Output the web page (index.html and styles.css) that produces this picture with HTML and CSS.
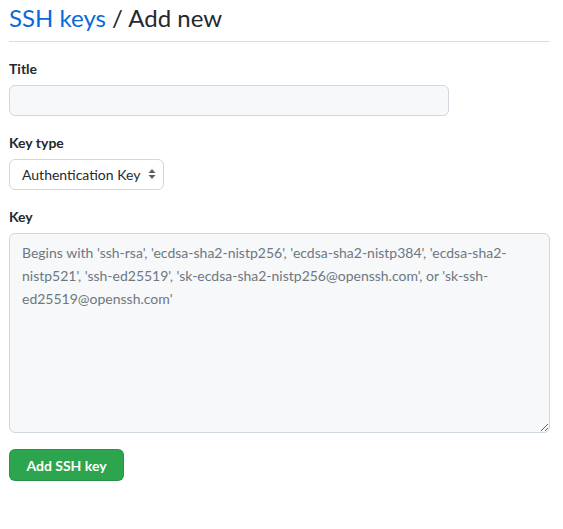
FILE: index.html
```html
<!DOCTYPE html>
<html lang="en">
<head>
<meta charset="utf-8">
<title>Add new SSH key</title>
<link rel="stylesheet" href="styles.css">
</head>
<body>
<div class="page">
  <div class="subhead">
    <h2 class="subhead-heading"><a class="crumb" href="#">SSH keys</a> / Add new</h2>
  </div>
  <form class="key-form">
    <div class="form-group">
      <label class="form-label" for="title">Title</label>
      <input class="form-control title-input" type="text" id="title">
    </div>
    <div class="form-group">
      <label class="form-label" for="type">Key type</label>
      <div class="select-wrap">
        <select class="form-select" id="type">
          <option>Authentication Key</option>
          <option>Signing Key</option>
        </select>
        <svg class="select-caret" width="8" height="12" viewBox="0 0 8 12" aria-hidden="true">
          <path d="M4 1 L7.5 5 H0.5 Z" fill="#57606a"/>
          <path d="M4 11 L7.5 7 H0.5 Z" fill="#57606a"/>
        </svg>
      </div>
    </div>
    <div class="form-group last">
      <label class="form-label" for="key">Key</label>
      <textarea class="form-control key-input" id="key" placeholder="Begins with 'ssh-rsa', 'ecdsa-sha2-nistp256', 'ecdsa-sha2-nistp384', 'ecdsa-sha2-nistp521', 'ssh-ed25519', 'sk-ecdsa-sha2-nistp256@openssh.com', or 'sk-ssh-ed25519@openssh.com'"></textarea>
    </div>
    <button class="btn-primary" type="button">Add SSH key</button>
  </form>
</div>
</body>
</html>
```

FILE: styles.css
```css
html, body {
  margin: 0;
  padding: 0;
  background: #ffffff;
}

body {
  font-family: Lato, "Open Sans", "Liberation Sans", sans-serif;
  font-size: 14px;
  line-height: 1.5;
  color: #24292f;
}

.page {
  padding: 0 13px 0 9px;
}

.subhead {
  border-bottom: 1px solid #d8dee4;
  padding-bottom: 7px;
  margin-bottom: 17px;
}

.subhead-heading {
  margin: 0;
  padding-top: 2px;
  font-size: 24px;
  font-weight: 400;
  line-height: 32px;
  color: #24292f;
}

.crumb {
  color: #0969da;
  text-decoration: none;
}

.key-form {
  display: flex;
  flex-direction: column;
  align-items: flex-start;
}

.form-group {
  display: flex;
  flex-direction: column;
  align-items: flex-start;
  width: 100%;
  margin-bottom: 17px;
}

.form-group.last {
  margin-bottom: 16px;
}

.form-label {
  font-weight: 700;
  font-size: 14px;
  line-height: 20px;
  margin-bottom: 6px;
}

.form-control {
  box-sizing: border-box;
  font-family: inherit;
  font-size: 14px;
  color: #24292f;
  background: #f6f8fa;
  border: 1px solid #d0d7de;
  border-radius: 6px;
  outline: none;
}

.title-input {
  width: 440px;
  height: 31px;
  padding: 5px 12px;
}

.select-wrap {
  position: relative;
}

.form-select {
  box-sizing: border-box;
  width: 155px;
  height: 31px;
  padding: 0 20px 0 12px;
  font-family: inherit;
  font-size: 14px;
  color: #24292f;
  background: #ffffff;
  border: 1px solid #d0d7de;
  border-radius: 6px;
  appearance: none;
  -webkit-appearance: none;
  outline: none;
}

.select-caret {
  position: absolute;
  right: 8px;
  top: 9px;
  pointer-events: none;
}

.key-input {
  display: block;
  width: 100%;
  height: 200px;
  padding: 7px 12px;
  line-height: 23px;
  resize: vertical;
}

.key-input::placeholder {
  color: #6e7781;
  opacity: 1;
}

.btn-primary {
  box-sizing: border-box;
  height: 32px;
  width: 115px;
  padding: 0 12px;
  white-space: nowrap;
  font-family: inherit;
  font-size: 14px;
  font-weight: 700;
  color: #ffffff;
  background: #2da44e;
  border: 1px solid rgba(27, 31, 36, 0.15);
  border-radius: 6px;
  cursor: pointer;
}
```
